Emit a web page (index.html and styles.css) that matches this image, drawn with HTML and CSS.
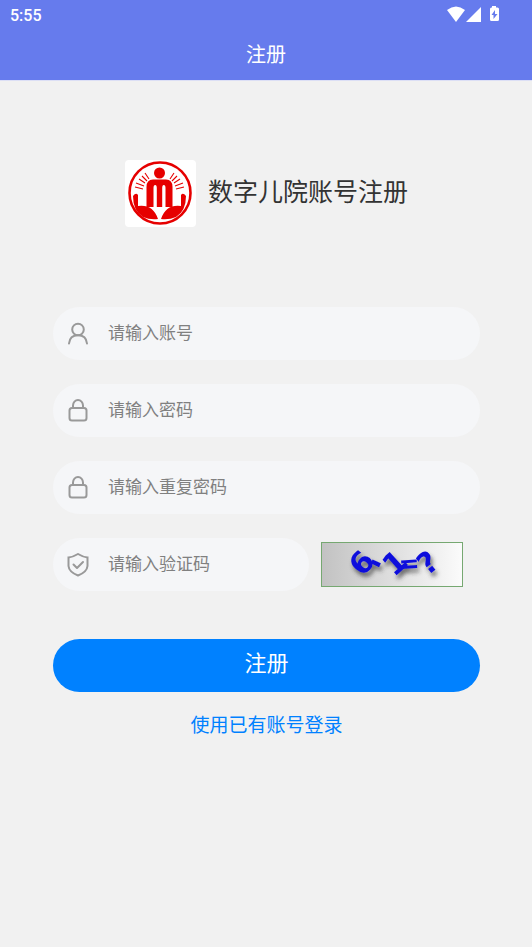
FILE: index.html
```html
<!DOCTYPE html>
<html lang="zh-CN">
<head>
<meta charset="utf-8">
<meta name="viewport" content="width=device-width, initial-scale=1">
<title>注册</title>
<link rel="stylesheet" href="styles.css">
</head>
<body>
<header class="topbar">
  <div class="status">
    <span class="clock">5:55</span>
    <svg class="status-icons" width="54" height="18" viewBox="0 0 54 18" fill="#fff" aria-hidden="true">
      <path d="M0 4Q9 -3 18 4L9 16Z"/>
      <path d="M34 1V16H19Z"/>
      <path fill-rule="evenodd" d="M45 0h4v1.500h1.500q1.500 0 1.500 1.500v10.500q0 1.500-1.500 1.500h-6q-1.500 0-1.500-1.500V3q0-1.500 1.500-1.500H45ZM48 4l-3.500 5h2v4l4-5H48Z"/>
    </svg>
  </div>
  <h1 class="page-title">注册</h1>
</header>
<main class="content">
  <div class="brand">
    <svg class="logo" viewBox="0 0 71 67" aria-hidden="true">
      <rect width="71" height="67" rx="4" fill="#fff"/>
      <circle cx="35" cy="33" r="30.500" fill="none" stroke="#e60000" stroke-width="2.600"/>
      <g fill="#e60000">
        <circle cx="34.500" cy="13" r="5.500"/>
        <path d="M21.500 47V27Q21.500 19.500 28 19.500H41Q47.500 19.500 47.500 27V47H40.500V28Q40.500 25 38.800 25Q37.200 25 37.200 28V47H31.800V28Q31.800 25 30.200 25Q28.500 25 28.500 28V47Z"/>
        <path d="M8 36Q11 32 13 35V46Q28 44 33 59Q25 60 18 57Q8 51 8 36Z"/>
        <path d="M61 36Q58 32 56 35V46Q41 44 36 59Q44 60 51 57Q61 51 61 36Z"/>
      </g>
      <path d="M10 27L18 29M11 23L19 26M14 19L20 23M17 16L22 21M20 13L24 19M59 27L51 29M58 23L50 26M55 19L49 23M52 16L47 21M49 13L45 19" stroke="#e60000" stroke-width="1.100"/>
    </svg>
    <h2 class="brand-name">数字儿院账号注册</h2>
  </div>
  <form class="form">
    <div class="field">
      <label class="field-icon" for="account">
        <svg width="24" height="24" viewBox="0 0 24 24"><circle cx="12" cy="7.500" r="5.800"/><path d="M3 21.500C3.500 16.500 6.500 13.300 12 13.300S20.500 16.500 21 21.500"/></svg>
      </label>
      <input id="account" type="text" placeholder="请输入账号" aria-label="账号">
    </div>
    <div class="field">
      <label class="field-icon" for="password">
        <svg width="24" height="24" viewBox="0 0 24 24"><rect x="3.500" y="9" width="17" height="12.500" rx="2.500"/><path d="M7 9V6.500a5 5.500 0 0 1 10 0V9"/></svg>
      </label>
      <input id="password" type="password" placeholder="请输入密码" aria-label="密码">
    </div>
    <div class="field">
      <label class="field-icon" for="repeat">
        <svg width="24" height="24" viewBox="0 0 24 24"><rect x="3.500" y="9" width="17" height="12.500" rx="2.500"/><path d="M7 9V6.500a5 5.500 0 0 1 10 0V9"/></svg>
      </label>
      <input id="repeat" type="password" placeholder="请输入重复密码" aria-label="重复密码">
    </div>
    <div class="code-row">
      <div class="field">
        <label class="field-icon" for="code">
          <svg width="24" height="24" viewBox="0 0 24 24"><path stroke-linejoin="miter" d="M12 1Q17 4 21.500 4.500V13Q21 19 12 22.500Q3 19 2.500 13V4.500Q7 4 12 1Z"/><path d="M7.500 11.500L11 15L17 9"/></svg>
        </label>
        <input id="code" type="text" placeholder="请输入验证码" aria-label="验证码">
      </div>
      <svg class="captcha" viewBox="0 0 142 45" role="img" aria-label="6-1=?">
        <defs>
          <linearGradient id="fade"><stop offset="0" stop-color="#c2c2c2"/><stop offset="1" stop-color="#fbfbfb"/></linearGradient>
          <filter id="shade" x="-20%" y="-40%" width="140%" height="200%"><feDropShadow dx="2" dy="4" stdDeviation="2" flood-color="#333" flood-opacity=".7"/></filter>
        </defs>
        <rect x=".5" y=".5" width="141" height="44" fill="url(#fade)" stroke="#76a871"/>
        <g class="captcha-text" filter="url(#shade)">
          <text transform="translate(41 21) rotate(-50)" y="10">6</text>
          <text transform="translate(55 21) rotate(25)" y="9">-</text>
          <text transform="translate(74 21) rotate(-42)" y="10">1</text>
          <text class="equals" transform="translate(88 21) rotate(-4)" y="9">=</text>
          <text transform="translate(107 21) rotate(-38)" y="10">?</text>
        </g>
      </svg>
    </div>
    <button class="submit" type="submit">注册</button>
    <a class="login-link" href="#login">使用已有账号登录</a>
  </form>
</main>
</body>
</html>
```
FILE: styles.css
```css
* {
  box-sizing: border-box;
}

body {
  margin: 0;
  min-height: 100vh;
  background: #f1f1f1;
  color: #333;
  font-family: Roboto, "Noto Sans CJK SC", sans-serif;
}

.topbar {
  background: #667bed;
  border-bottom: 1px solid #dcdff5;
  color: #fff;
}

.status {
  display: flex;
  align-items: center;
  justify-content: space-between;
  height: 30px;
  padding: 0 31px 0 10px;
}

.clock {
  font-size: 16px;
  font-weight: 500;
}

.status-icons {
  display: block;
}

.page-title {
  margin: 0;
  font-size: 20px;
  font-weight: 400;
  line-height: 50px;
  text-align: center;
}

.content {
  padding: 79px 52px 0 53px;
}

.brand {
  display: flex;
  align-items: center;
  justify-content: center;
  gap: 12px;
  margin-bottom: 80px;
}

.logo {
  width: 71px;
  height: 67px;
}

.brand-name {
  margin: 0;
  padding-bottom: 8px;
  font-size: 25px;
  font-weight: 400;
}

.form {
  display: flex;
  flex-direction: column;
  gap: 24px;
}

.field {
  display: flex;
  align-items: center;
  height: 53px;
  padding: 0 20px 0 13px;
  border-radius: 27px;
  background: #f5f6f8;
}

.field-icon {
  flex: none;
  height: 24px;
  margin-right: 18px;
  fill: none;
  stroke: #999;
  stroke-width: 2;
  stroke-linecap: round;
  stroke-linejoin: round;
}

.field input {
  flex: 1;
  min-width: 0;
  height: 100%;
  padding: 0 0 2px;
  border: 0;
  outline: 0;
  background: none;
  color: #333;
  font: inherit;
  font-size: 17px;
}

.field input::placeholder {
  color: #808080;
  opacity: 1;
}

.code-row {
  display: flex;
  align-items: center;
  gap: 12px;
}

.code-row .field {
  width: 60%;
}

.captcha {
  width: 142px;
  height: 45px;
}

.captcha-text {
  fill: #1010dc;
  font-family: "DejaVu Sans", sans-serif;
  font-size: 30px;
  font-weight: 700;
  text-anchor: middle;
}

.equals {
  font-size: 25px;
}

.submit {
  height: 53px;
  margin-top: 24px;
  padding: 0 0 10px;
  border: 0;
  border-radius: 27px;
  background: #0081ff;
  color: #fff;
  font: inherit;
  font-size: 22px;
}

.login-link {
  align-self: center;
  margin-top: -4px;
  color: #0081ff;
  font-size: 19px;
  line-height: 28px;
  text-decoration: none;
}
```
